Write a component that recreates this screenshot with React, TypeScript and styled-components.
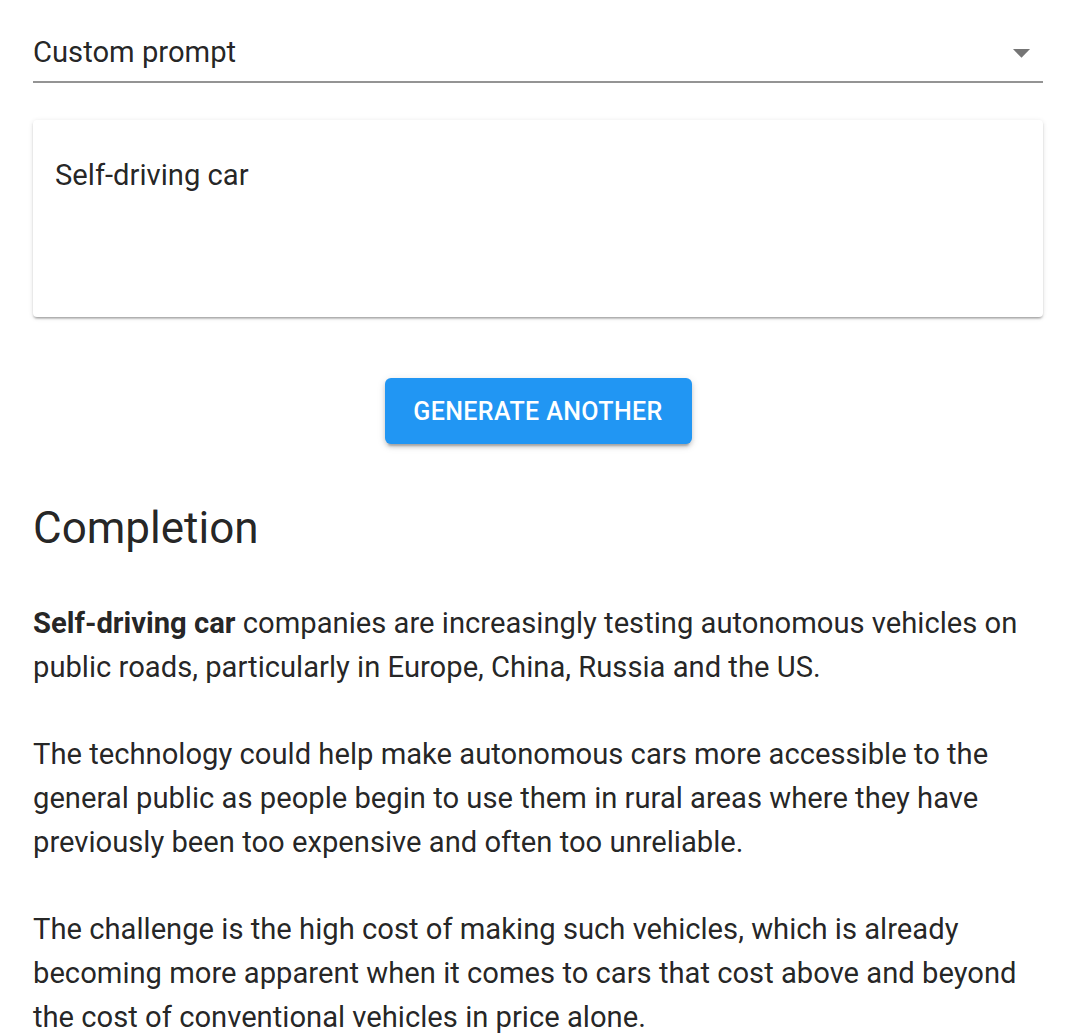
import React, { useState } from "react";
import styled, { createGlobalStyle } from "styled-components";

const GlobalStyle = createGlobalStyle`
  body {
    margin: 0;
    background: #ffffff;
    font-family: Roboto, "Noto Sans", Arial, sans-serif;
    color: rgba(0, 0, 0, 0.87);
  }
`;

const paragraphs = [
  "The technology could help make autonomous cars more accessible to the general public as people begin to use them in rural areas where they have previously been too expensive and often too unreliable.",
  "The challenge is the high cost of making such vehicles, which is already becoming more apparent when it comes to cars that cost above and beyond the cost of conventional vehicles in price alone.",
];

export default function App() {
  const [prompt, setPrompt] = useState<string>("Self-driving car");

  return (
    <Page>
      <GlobalStyle />
      <Select>
        <SelectValue>Custom prompt</SelectValue>
        <DropIcon viewBox="0 0 24 24">
          <path d="M7 10l5 5 5-5z" />
        </DropIcon>
      </Select>
      <PromptCard>
        <PromptInput
          value={prompt}
          onChange={(e) => setPrompt(e.target.value)}
        />
      </PromptCard>
      <ButtonRow>
        <GenerateButton>Generate another</GenerateButton>
      </ButtonRow>
      <Heading>Completion</Heading>
      <Paragraph>
        <strong>Self-driving car</strong> companies are increasingly testing
        autonomous vehicles on public roads, particularly in Europe, China,
        Russia and the US.
      </Paragraph>
      {paragraphs.map((text, i) => (
        <Paragraph key={i}>{text}</Paragraph>
      ))}
    </Page>
  );
}

const Page = styled.div`
  display: flex;
  flex-direction: column;
  padding: 0 37px 0 33px;
`;

const Select = styled.div`
  display: flex;
  flex-direction: row;
  align-items: center;
  justify-content: space-between;
  padding: 30px 1px 7px 0;
  border-bottom: 2px solid rgba(0, 0, 0, 0.42);
`;

const SelectValue = styled.span`
  font-size: 29.2px;
  line-height: 44px;
  color: rgba(0, 0, 0, 0.87);
`;

const DropIcon = styled.svg`
  width: 41px;
  height: 41px;
  fill: rgba(0, 0, 0, 0.54);
`;

const PromptCard = styled.div`
  margin-top: 37px;
  height: 197px;
  box-sizing: border-box;
  padding: 33px 22px;
  background: #fff;
  border-radius: 4px;
  box-shadow: 0 3px 2px -2px rgba(0, 0, 0, 0.2), 0 2px 2px 0 rgba(0, 0, 0, 0.14),
    0 1px 5px 0 rgba(0, 0, 0, 0.12);
`;

const PromptInput = styled.input`
  width: 100%;
  border: none;
  outline: none;
  padding: 0;
  background: transparent;
  font-family: Roboto, "Noto Sans", Arial, sans-serif;
  font-size: 29.2px;
  line-height: 44px;
  height: 44px;
  color: rgba(0, 0, 0, 0.87);
`;

const ButtonRow = styled.div`
  display: flex;
  justify-content: center;
  margin-top: 61px;
`;

const GenerateButton = styled.button`
  width: 307px;
  height: 66px;
  border: none;
  border-radius: 6px;
  background: #2196f3;
  color: #fff;
  font-family: Roboto, "Noto Sans", Arial, sans-serif;
  font-weight: 500;
  font-size: 25px;
  letter-spacing: 0.4px;
  text-transform: uppercase;
  cursor: pointer;
  box-shadow: 0 5px 2px -3px rgba(0, 0, 0, 0.2), 0 3px 4px 0 rgba(0, 0, 0, 0.14),
    0 2px 8px 0 rgba(0, 0, 0, 0.12);
`;

const Heading = styled.h4`
  margin: 52px 0 41px;
  font-size: 44px;
  font-weight: 400;
  line-height: 64px;
  color: rgba(0, 0, 0, 0.87);
`;

const Paragraph = styled.p`
  margin: 0 0 43px;
  font-size: 29.2px;
  line-height: 44px;
  color: rgba(0, 0, 0, 0.87);

  strong {
    font-weight: 700;
  }
`;
